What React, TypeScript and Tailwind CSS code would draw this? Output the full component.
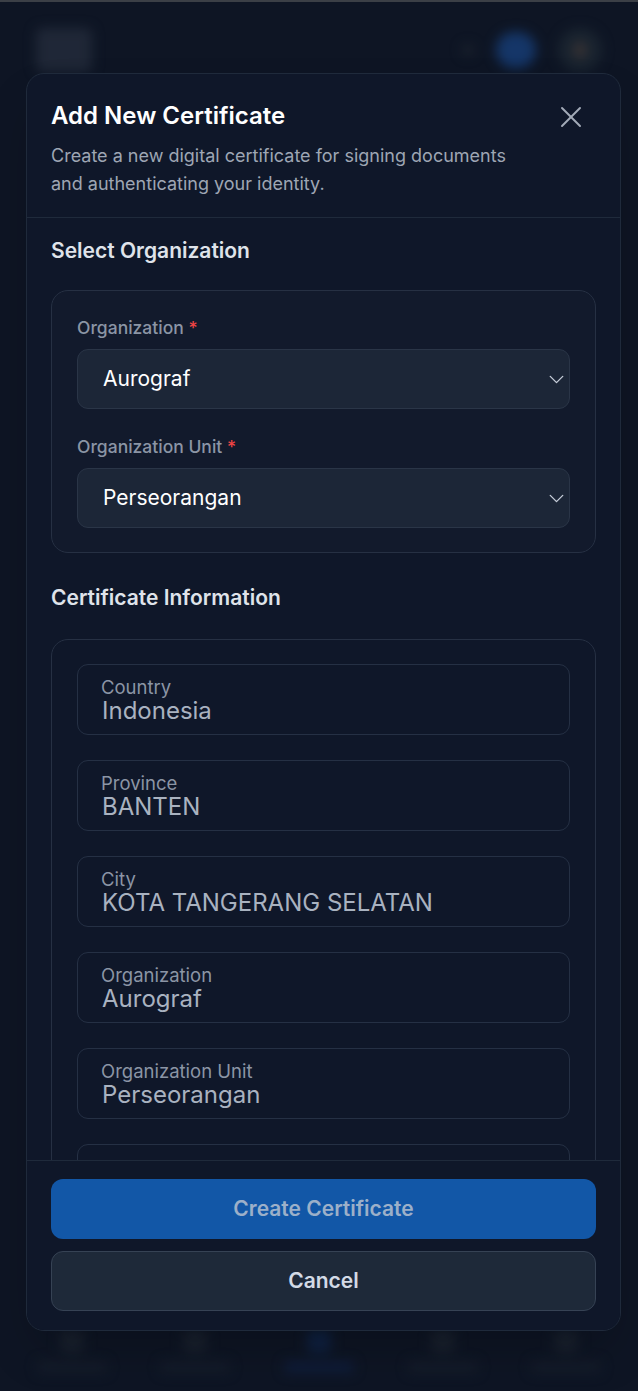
import { ChevronDown, X } from 'lucide-react';

const certFields = [
  { label: 'Country', value: 'Indonesia' },
  { label: 'Province', value: 'BANTEN' },
  { label: 'City', value: 'KOTA TANGERANG SELATAN' },
  { label: 'Organization', value: 'Aurograf' },
  { label: 'Organization Unit', value: 'Perseorangan' },
  { label: '', value: '' },
];

function SelectField({ label, value }: { label: string; value: string }) {
  return (
    <div>
      <p className="text-[17.5px] leading-[22px] text-[#8b95a5] font-medium">
        {label} <span className="text-[#ef4444]">*</span>
      </p>
      <div className="mt-[10px] h-[60px] rounded-[11px] border border-[#2a3547] bg-[#1c2637] pl-[25px] pr-[0px] flex items-center justify-between">
        <span className="text-[21px] text-white">{value}</span>
        <ChevronDown className="w-[25px] h-[25px] text-[#c5ccd8]" strokeWidth={1.3} />
      </div>
    </div>
  );
}

function Backdrop() {
  // blurred page behind the dialog
  return (
    <div className="absolute inset-0 blur-[6px]">
      <div className="flex items-center justify-between px-[36px] pt-[26px]">
        <div className="w-[56px] h-[44px] rounded-md bg-[#2e3646]" />
        <div className="flex items-center gap-[22px]">
          <div className="w-[12px] h-[12px] rounded-full bg-[#262c36]" />
          <div className="w-[40px] h-[36px] rounded-full bg-[#1d4f98]" />
          <div className="w-[44px] h-[44px] rounded-full bg-[#24303a] flex items-center justify-center">
            <div className="w-[12px] h-[16px] rounded-full bg-[#5b4a40]" />
          </div>
        </div>
      </div>
      <div className="absolute bottom-[18px] left-0 right-0 flex justify-around px-[10px]">
        {[0, 1, 2, 3, 4].map(i => (
          <div key={i} className="flex flex-col items-center gap-[8px]">
            <div className={`w-[24px] h-[24px] rounded-md ${i === 2 ? 'bg-[#132b56]' : 'bg-[#222a36]'}`} />
            <div className={`w-[70px] h-[12px] rounded ${i === 2 ? 'bg-[#13244a]' : 'bg-[#1b2230]'}`} />
          </div>
        ))}
      </div>
    </div>
  );
}

export default function App() {
  return (
    <div className="relative w-full h-[1391px] overflow-hidden bg-[#111827] border-t-2 border-[#3b3f46]" style={{ fontFamily: 'Inter, "Noto Sans", sans-serif' }}>
      <Backdrop />
      <div className="absolute inset-0 bg-[#0b1120]/40" />

      <div className="absolute left-[26px] top-[71px] w-[595px] h-[1258px] rounded-[18px] border border-[#1f2a3b] bg-[#0f1729] flex flex-col overflow-hidden shadow-2xl">
        {/* header */}
        <div className="relative px-[24px] pt-[27px] pb-[19px] border-b border-[#1f2a3b]">
          <h2 className="text-[24px] leading-[30px] font-semibold text-white">Add New Certificate</h2>
          <p className="mt-[11px] text-[18px] leading-[28px] text-[#9ea6b4] pr-[70px]">
            Create a new digital certificate for signing documents and authenticating your identity.
          </p>
          <button className="absolute right-[31px] top-[25px] text-[#a3abb8]">
            <X className="w-[36px] h-[36px]" strokeWidth={1.3} />
          </button>
        </div>

        {/* body */}
        <div className="flex-1 overflow-hidden px-[24px] pt-[19px]">
          <h3 className="text-[21px] leading-[28px] font-semibold text-[#dfe3ea]">Select Organization</h3>
          <div className="mt-[25px] rounded-[17px] border border-[#263043] bg-[#121a2c] px-[25px] pt-[26px] pb-[24px] flex flex-col gap-[27px]">
            <SelectField label="Organization" value="Aurograf" />
            <SelectField label="Organization Unit" value="Perseorangan" />
          </div>

          <h3 className="mt-[31px] text-[21px] leading-[28px] font-semibold text-[#dfe3ea]">Certificate Information</h3>
          <div className="mt-[27px] rounded-[17px] border border-[#263043] bg-[#0f1729] px-[25px] pt-[24px] pb-[24px] flex flex-col gap-[25px]">
            {certFields.map((f, i) => (
              <div key={i} className="h-[71px] rounded-[11px] border border-[#253044] bg-[#0f1729] px-[23px] pt-[11px]">
                <p className="text-[18.5px] leading-[22px] text-[#8b95a5]">{f.label}</p>
                <p className="text-[24px] leading-[26px] text-[#a9b2c0] pl-[1px]">{f.value}</p>
              </div>
            ))}
          </div>
        </div>

        {/* footer */}
        <div className="border-t border-[#1f2a3b] bg-[#0f1729] px-[24px] pt-[18px] pb-[19px] flex flex-col gap-[12px]">
          <button className="h-[60px] rounded-[12px] bg-[#1257a7] text-[21px] font-semibold text-[#9cb0c9]">
            Create Certificate
          </button>
          <button className="h-[60px] rounded-[12px] border border-[#364254] bg-[#1e2939] text-[21px] font-semibold text-[#d3dae6]">
            Cancel
          </button>
        </div>
      </div>
    </div>
  );
}
